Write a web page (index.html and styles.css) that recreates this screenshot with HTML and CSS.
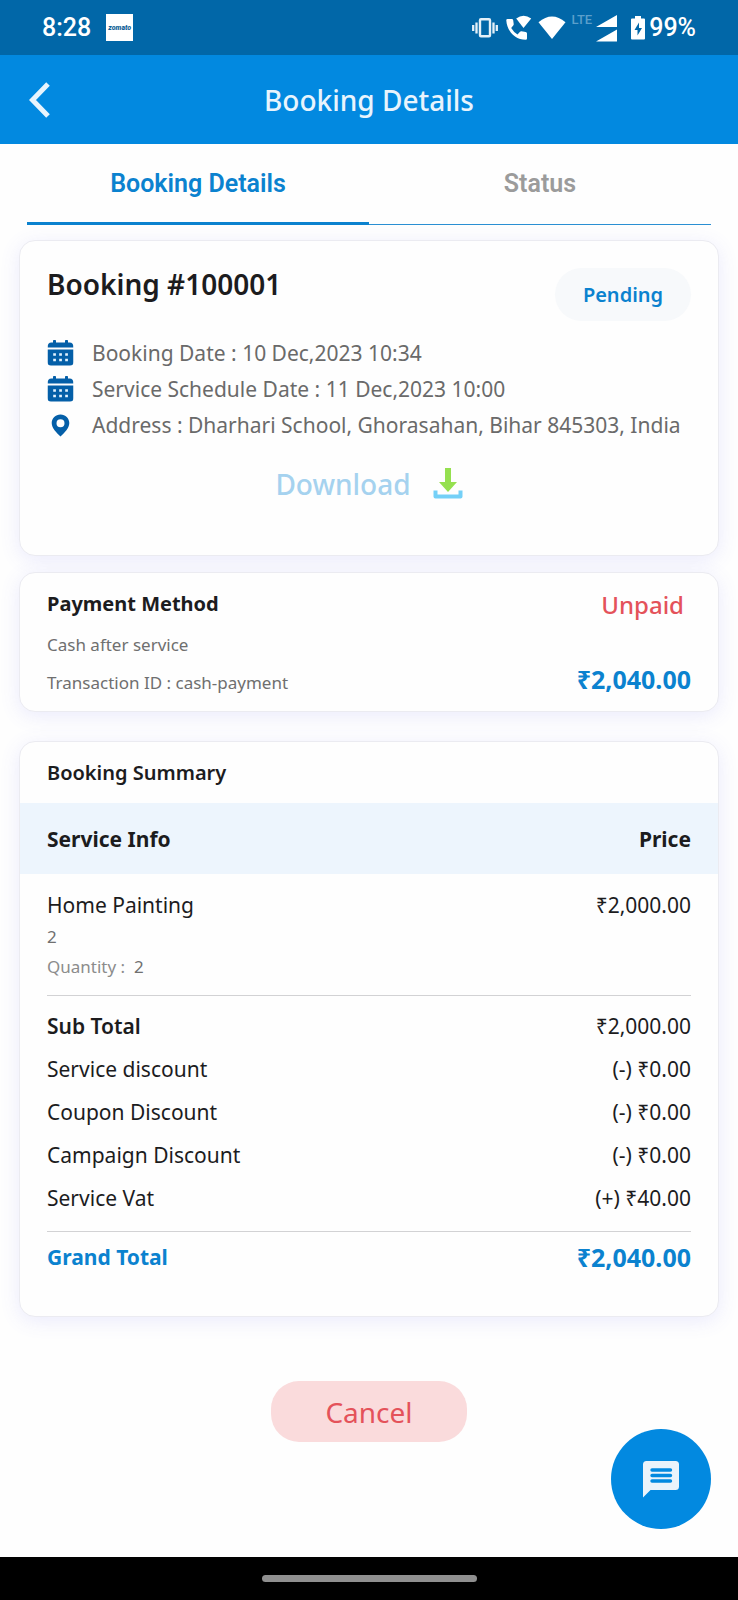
FILE: index.html
```html
<!DOCTYPE html>
<html lang="en">
<head>
<meta charset="utf-8">
<meta name="viewport" content="width=device-width, initial-scale=1">
<title>Booking Details</title>
<link rel="stylesheet" href="styles.css">
</head>
<body>
<div class="status-bar">
  <div class="status-left">
    <span class="clock">8:28</span>
    <span class="app-tile">zomato</span>
  </div>
  <div class="status-right">
    <svg class="ic-vibrate" width="26" height="20" viewBox="0 0 26 20" aria-hidden="true"><rect x="8" y="1.200" width="10" height="17" rx="1" fill="none" stroke="#e4f0f8" stroke-width="2.400"/><path d="M1.200 7v6M4.500 4.500v11M21.500 4.500v11M24.800 7v6" stroke="#e4f0f8" stroke-width="2.300"/></svg>
    <svg class="ic-call" width="26" height="26" viewBox="0 0 26 26" aria-hidden="true"><path fill="#fff" d="M1.500 4h4.300q1.200 0 1.400 1.300l.5 3.600q.1.900-.5 1.500L5.200 13q2.500 4.300 6.300 6.400l2.500-2.700q.6-.6 1.500-.5l4.200.8q1.300.2 1.300 1.500V23.500q0 1.300-1.300 1.300C9.500 24.800 1 16.500.3 5.500Q.2 4 1.500 4z"/><path fill="#fff" d="M17.500 13L10.200 3.500q7.300-5.400 15 0z"/></svg>
    <svg class="ic-wifi" width="28" height="24" viewBox="0 0 28 24" aria-hidden="true"><path fill="#fff" d="M14 23L.5 6.300q13.500-11.500 27 0z"/></svg>
    <span class="lte">LTE</span>
    <svg class="ic-signal" width="21" height="28" viewBox="0 0 21 28" aria-hidden="true"><path fill="#fff" d="M0 13L21 1v12zM0 27.500l21-12v12z"/></svg>
    <svg class="ic-battery" width="14" height="24" viewBox="0 0 14 24" aria-hidden="true"><path fill="#fff" d="M4 0h6v2.500h3q1 0 1 1V22.500q0 1-1 1H1q-1 0-1-1V3.500q0-1 1-1h3z"/><path fill="#0167a8" d="M8 6.500L3.500 14h3v5.500L11 12H8z"/></svg>
    <span class="percent">99%</span>
  </div>
</div>
<header class="app-bar">
  <button class="back" type="button" aria-label="Back"><svg width="22" height="36" viewBox="0 0 22 36"><path d="M19 2L3.500 18L19 34" fill="none" stroke="#e8f4fd" stroke-width="5"/></svg></button>
  <h1 class="app-title">Booking Details</h1>
</header>
<main class="page">
  <div class="tabs" role="tablist">
    <button class="tab tab-active" type="button" role="tab" aria-selected="true">Booking Details</button>
    <button class="tab" type="button" role="tab" aria-selected="false">Status</button>
  </div>

  <section class="card booking">
    <div class="booking-head">
      <h2 class="booking-title">Booking #100001</h2>
      <span class="badge">Pending</span>
    </div>
    <ul class="facts">
      <li class="fact"><svg class="fact-icon" viewBox="0 0 26 26" aria-hidden="true"><use href="#calendar"/></svg>Booking Date : 10 Dec,2023 10:34</li>
      <li class="fact"><svg class="fact-icon" viewBox="0 0 26 26" aria-hidden="true"><use href="#calendar"/></svg>Service Schedule Date : 11 Dec,2023 10:00</li>
      <li class="fact"><svg class="fact-icon" viewBox="0 0 26 26" aria-hidden="true"><path fill="#045fa8" fill-rule="evenodd" d="M13 2.500c5 0 8.800 3.700 8.800 8.500 0 5-4.600 9.500-8.800 13.500-4.200-4-8.800-8.500-8.800-13.500 0-4.800 3.800-8.500 8.800-8.500zm0 4.800a4 4 0 1 0 0 8 4 4 0 0 0 0-8z"/></svg>Address : Dharhari School, Ghorasahan, Bihar 845303, India</li>
    </ul>
    <button class="download" type="button">Download
      <svg width="30" height="32" viewBox="0 0 30 32" aria-hidden="true"><path fill="#95e04f" d="M12 0h6v14h6l-9 10-9-10h6z"/><path d="M2.500 22.500v6h25v-6" fill="none" stroke="#74d0f7" stroke-width="4" stroke-linejoin="round"/></svg>
    </button>
  </section>

  <section class="card payment">
    <div class="payment-info">
      <h2 class="label-strong">Payment Method</h2>
      <p class="note">Cash after service</p>
      <p class="note">Transaction ID : cash-payment</p>
    </div>
    <div class="payment-state">
      <span class="unpaid">Unpaid</span>
      <span class="amount">₹2,040.00</span>
    </div>
  </section>

  <section class="card summary">
    <h2 class="summary-title">Booking Summary</h2>
    <table class="bill">
      <thead>
        <tr><th scope="col">Service Info</th><th scope="col">Price</th></tr>
      </thead>
      <tbody>
        <tr class="item"><td>Home Painting<div class="item-note">2</div><div class="item-note item-qty">Quantity :&nbsp; <span class="qty">2</span></div></td><td>₹2,000.00</td></tr>
        <tr class="rule"><td colspan="2"><hr></td></tr>
      </tbody>
      <tbody class="lines">
        <tr><td class="subtotal">Sub Total</td><td>₹2,000.00</td></tr>
        <tr><td>Service discount</td><td>(-) ₹0.00</td></tr>
        <tr><td>Coupon Discount</td><td>(-) ₹0.00</td></tr>
        <tr><td>Campaign Discount</td><td>(-) ₹0.00</td></tr>
        <tr><td>Service Vat</td><td>(+) ₹40.00</td></tr>
      </tbody>
      <tfoot>
        <tr class="rule"><td colspan="2"><hr></td></tr>
        <tr class="grand"><td>Grand Total</td><td class="amount">₹2,040.00</td></tr>
      </tfoot>
    </table>
  </section>

  <button class="cancel" type="button">Cancel</button>
  <button class="chat" type="button" aria-label="Chat"><svg width="38" height="38" viewBox="0 0 38 38"><path fill="#eaf3fb" d="M4.500 1h29q3.500 0 3.500 3.500v22q0 3.500-3.500 3.500H8.500L1 37.500V4.500Q1 1 4.500 1z"/><path d="M10 10h18.500M10 15.500h18.500M10 21h18.500" stroke="#0289e0" stroke-width="3.400" stroke-linecap="round"/></svg></button>
</main>
<div class="nav-bar"><span class="nav-pill"></span></div>

<svg class="sprite" aria-hidden="true">
  <symbol id="calendar" viewBox="0 0 26 26">
    <path fill="#045fa8" d="M0 7.500Q0 2.500 4 2.500h1.500V.8q0-.8.800-.8h1.400q.8 0 .8.800v1.700h9V.8q0-.8.800-.8h1.400q.8 0 .8.800v1.700H22q4 0 4 5zM0 9.500h26V22q0 3.500-3.500 3.500h-19Q0 25.500 0 22z"/>
    <path d="M7 14.500h.1M13 14.500h.1M19 14.500h.1M7 20h.1M13 20h.1M19 20h.1" stroke="#e4f3ff" stroke-width="2.600" stroke-linecap="square"/>
  </symbol>
</svg>
</body>
</html>
```
FILE: styles.css
```css
* { box-sizing: border-box; }

body {
  margin: 0;
  min-height: 100vh;
  display: flex;
  flex-direction: column;
  background: #fefefe;
  color: #1c1c1e;
  font-family: "Noto Sans", sans-serif;
  font-size: 20px;
}

h1, h2, p, ul { margin: 0; padding: 0; }

button {
  border: 0;
  padding: 0;
  background: none;
  font: inherit;
  cursor: pointer;
}

svg { display: block; flex: none; }

.sprite { position: absolute; width: 0; height: 0; }

.status-bar {
  display: flex;
  justify-content: space-between;
  align-items: center;
  height: 55px;
  padding: 0 42px;
  background: #0167a8;
  color: #fff;
  font-family: Roboto, sans-serif;
  font-size: 25px;
  font-weight: 500;
}

.status-left, .status-right { display: flex; align-items: center; }
.status-left { gap: 15px; }

.app-tile {
  display: grid;
  place-items: center;
  width: 27px;
  height: 27px;
  background: #fff;
  color: #0f6298;
  font-size: 7px;
  font-weight: 900;
  font-style: italic;
}

.ic-call { margin-left: 8px; }
.ic-wifi { margin-left: 6px; }
.ic-signal { margin-left: 4px; }
.ic-battery { margin-left: 14px; }
.percent { margin-left: 4px; }

.lte {
  align-self: flex-start;
  margin-left: 5px;
  color: #5b9fcb;
  font-size: 13px;
  line-height: 14px;
}

.app-bar {
  display: grid;
  grid-template-columns: 48px 1fr 48px;
  align-items: center;
  height: 89px;
  padding: 0 16px;
  background: #0289e0;
}

.back { display: grid; place-items: center; height: 48px; }

.app-title {
  color: #e8f4fd;
  font-size: 28px;
  font-weight: 500;
  text-align: center;
}

.page {
  position: relative;
  flex: 1;
  display: flex;
  flex-direction: column;
  padding: 0 19px;
}

.tabs {
  display: flex;
  margin: 0 8px 15px;
}

.tab {
  flex: 1;
  height: 81px;
  padding-bottom: 2px;
  border-bottom: 1px solid #2a8fd3;
  color: #9b9b9b;
  font-family: Roboto, sans-serif;
  font-size: 25px;
  font-weight: 600;
}

.tab-active {
  padding-bottom: 0;
  border-bottom: 3px solid #0b82cf;
  color: #0b82cf;
}

.card {
  border: 1px solid #ebebf1;
  border-radius: 16px;
  background: #fefefe;
  box-shadow: 0 4px 20px rgba(90, 90, 240, 0.12);
}

.booking { padding: 27px 27px 49px; }

.booking-head {
  display: flex;
  justify-content: space-between;
  align-items: flex-start;
}

.booking-title {
  font-size: 28px;
  font-weight: 600;
  line-height: 32px;
}

.badge {
  min-width: 136px;
  padding: 0 26px;
  border-radius: 27px;
  background: #f7f9fb;
  color: #0b82cf;
  font-weight: 600;
  line-height: 53px;
  text-align: center;
}

.facts { margin-top: 14px; list-style: none; }

.fact {
  display: flex;
  align-items: center;
  gap: 18px;
  color: #6a6a6a;
  font-size: 21px;
  line-height: 36px;
}

.fact-icon { width: 27px; height: 26px; }

.download {
  display: flex;
  align-items: center;
  gap: 22px;
  height: 44px;
  margin: 19px auto 0;
  color: #a5d2ef;
  font-size: 28px;
  font-weight: 500;
}

.payment {
  display: flex;
  justify-content: space-between;
  margin-top: 16px;
  padding: 13px 27px 9px;
}

.label-strong {
  margin-bottom: 4px;
  font-size: 20px;
  font-weight: 700;
  line-height: 36px;
}

.note { color: #6f6f6f; font-size: 17px; line-height: 38px; }

.payment-state {
  display: flex;
  flex-direction: column;
  justify-content: space-between;
  align-items: flex-end;
  line-height: 38px;
}

.unpaid {
  padding-right: 7px;
  color: #e4525a;
  font-size: 24px;
  font-weight: 500;
}

.amount {
  color: #0b82cf;
  font-size: 25px;
  font-weight: 700;
}

.payment-state .amount { padding-bottom: 4px; }

.summary { margin-top: 29px; padding-bottom: 34px; }

.summary-title {
  padding: 0 27px;
  font-size: 20px;
  font-weight: 600;
  line-height: 61px;
}

.bill {
  width: 100%;
  border-collapse: collapse;
  font-size: 21px;
}

.bill th, .bill td {
  padding: 0 27px;
  text-align: left;
  vertical-align: top;
}

.bill th:last-child, .bill td:last-child { padding-left: 0; text-align: right; }

.bill th {
  height: 71px;
  background: #edf5fd;
  font-weight: 700;
  vertical-align: middle;
}

.bill .item td { padding-top: 14px; padding-bottom: 13px; line-height: 34px; }
.item-note { color: #707070; font-size: 17px; line-height: 30px; }
.item-qty { color: #8c8c8c; }
.qty { color: #707070; }

.bill .rule td { padding: 0 27px; }
.rule hr { height: 1px; margin: 0; border: 0; background: #d2d2d4; }

.lines td { line-height: 43px; }
.lines tr:first-child td { padding-top: 9px; }
.lines tr:last-child td { padding-bottom: 11px; }
.lines .subtotal { font-weight: 600; }

.bill .grand td { color: #0b82cf; font-weight: 700; line-height: 50px; }
.bill .grand .amount { font-size: 25px; }

.cancel {
  align-self: center;
  width: 196px;
  height: 61px;
  margin-top: 64px;
  border-radius: 28px;
  background: #fadbdc;
  color: #e4525a;
  font-size: 28px;
}

.chat {
  position: absolute;
  right: 27px;
  bottom: 28px;
  display: grid;
  place-items: center;
  width: 100px;
  height: 100px;
  border-radius: 50%;
  background: #0289e0;
}

.nav-bar {
  display: grid;
  place-items: center;
  height: 43px;
  background: #000;
}

.nav-pill {
  width: 215px;
  height: 7px;
  border-radius: 4px;
  background: #8f8f8f;
}
```
